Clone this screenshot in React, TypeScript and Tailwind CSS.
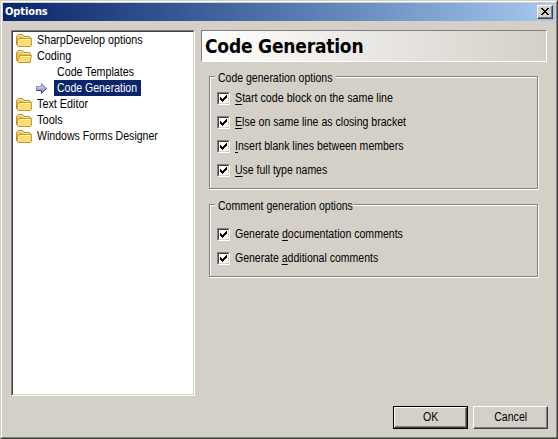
import type { ReactNode } from "react";

function Folder({ open = false }: { open?: boolean }) {
  return (
    <svg className="block h-4 w-4 shrink-0" viewBox="0 0 16 16">
      <path d="M0.5 12.5V4.5L2.5 2.5H6.5L8 4.5H13.5L14.5 5.5V13.5L13.5 14.5H2.5L0.5 12.5Z" fill="#eec04e" stroke="#bf9030" />
      <path d="M1.8 5L3 3.5H6L7.5 5.5H13" fill="none" stroke="#fff0a8" />
      {open ? (
        <>
          <path d="M2.5 14.5L1.5 13.5L3.5 7.5H15.5L14 14.5Z" fill="#fbdc74" stroke="#c7962f" />
          <path d="M4.2 8.5H14.5" stroke="#fff8c8" />
        </>
      ) : (
        <>
          <path d="M2.5 14.5L1.5 13.5V8.5L3.5 6.5H15.5V13.5L14.5 14.5Z" fill="#fbdc74" stroke="#c7962f" />
          <path d="M2.5 13.5V9L4 7.5H14.5" fill="none" stroke="#fff3b4" />
        </>
      )}
    </svg>
  );
}

function Arrow() {
  return (
    <svg className="ml-5 block h-4 w-4 shrink-0" viewBox="0 0 16 16">
      <path d="M0.5 6.5H5.5V3.5L10.5 8.5L5.5 13.5V10.5H0.5Z" fill="#a9aede" stroke="#8389c4" />
      <path d="M0.5 10.5H5.5V13L10.5 8.5" fill="none" stroke="#3d4278" />
      <path d="M1 7.5H6.5V6" fill="none" stroke="#c9ccf0" />
    </svg>
  );
}

function Label({ children, scale = "scale-x-[0.88]" }: { children: ReactNode; scale?: string }) {
  return <span className={`inline-block origin-left whitespace-pre ${scale}`}>{children}</span>;
}

function TreeRow({ text, open, scale }: { text: string; open?: boolean; scale?: string }) {
  return (
    <div className="flex h-4 items-center pl-[3px]">
      <Folder open={open} />
      <div className="ml-[5px] leading-4">
        <Label scale={scale}>{text}</Label>
      </div>
    </div>
  );
}

function Check({ children, scale }: { children: ReactNode; scale?: string }) {
  return (
    <div className="flex h-6 items-center">
      <div className="h-[13px] w-[13px] shrink-0 border border-t-[#808080] border-r-white border-b-white border-l-[#808080]">
        <div className="h-[11px] w-[11px] border border-t-[#404040] border-r-[#d4d0c8] border-b-[#d4d0c8] border-l-[#404040] bg-white">
          <svg className="block h-[9px] w-[9px]" viewBox="0 0 9 9" shapeRendering="crispEdges">
            <path d="M1 3h1v1h1v1h1v-1h1v-1h1v-1h1v-1h1v3h-1v1h-1v1h-1v1h-1v1h-1v-1h-1v-1h-1z" fill="#000" />
          </svg>
        </div>
      </div>
      <div className="ml-[5px] leading-4">
        <Label scale={scale}>{children}</Label>
      </div>
    </div>
  );
}

function Key({ children }: { children: string }) {
  return <span className="underline decoration-1 underline-offset-2">{children}</span>;
}

function Group({ title, legend, children }: { title: string; legend: string; children: ReactNode }) {
  return (
    <div className="grid">
      <div className="col-start-1 row-start-1 mt-[6px] mr-px mb-0.5 border border-[#808080] shadow-[1px_1px_0_#fff,inset_1px_1px_0_#fff]" />
      <div className="z-10 col-start-1 row-start-1 flex flex-col px-2">
        <div className={`-ml-[2px] h-4 overflow-hidden bg-[#d4d0c8] pl-[3px] leading-4 ${legend}`}>
          <Label scale="scale-x-[0.875]">{title}</Label>
        </div>
        {children}
      </div>
    </div>
  );
}

export default function App() {
  return (
    <div className="h-[439px] w-[558px] border border-t-[#d4d0c8] border-r-[#404040] border-b-[#404040] border-l-[#d4d0c8] bg-[#d4d0c8] font-['Liberation_Sans',Arial,sans-serif] text-xs text-black">
      <div className="flex h-full flex-col border border-t-white border-r-[#808080] border-b-[#808080] border-l-white p-px">
        <div className="flex h-[18px] shrink-0 items-center justify-between bg-linear-to-r from-[#0a246a] to-[#a6caf0] px-0.5 text-white">
          <span className="font-['DejaVu_Sans_Condensed','DejaVu_Sans',sans-serif] text-[11px] leading-4 font-bold tracking-[-0.1px]">Options</span>
          <div className="flex h-3.5 w-4 items-center justify-center border border-t-white border-r-[#404040] border-b-[#404040] border-l-white bg-[#d4d0c8] shadow-[inset_-1px_-1px_0_#808080]">
            <svg className="mr-px mb-px block h-[7px] w-2" viewBox="0 0 8 7" shapeRendering="crispEdges" fill="#000">
              <path d="M0 0h2v1h1v1h2v-1h1v-1h2v1h-1v1h-1v1h-1v1h1v1h1v1h1v1h-2v-1h-1v-1h-2v1h-1v1h-2v-1h1v-1h1v-1h1v-1h-1v-1h-1v-1h-1z" />
            </svg>
          </div>
        </div>

        <div className="mt-[9px] flex gap-1.5 pl-2">
          <div className="h-[366px] w-[184px] shrink-0 border border-t-[#808080] border-r-white border-b-white border-l-[#808080]">
            <div className="h-full border border-t-[#404040] border-r-[#d4d0c8] border-b-[#d4d0c8] border-l-[#404040] bg-white">
              <TreeRow text="SharpDevelop options" scale="scale-x-[0.895]" />
              <TreeRow text="Coding" open scale="scale-x-[0.9]" />
              <div className="h-4 pl-[43.5px] leading-4">
                <Label scale="scale-x-[0.89]">Code Templates</Label>
              </div>
              <div className="flex h-4 items-center">
                <div className="w-[41px] pl-[3px]">
                  <Arrow />
                </div>
                <div className="h-4 w-[87px] bg-[#0a246a] pl-[2.5px] leading-4 text-white">
                  <Label scale="scale-x-[0.875]">Code Generation</Label>
                </div>
              </div>
              <TreeRow text="Text Editor" scale="scale-x-[0.9]" />
              <TreeRow text="Tools" scale="scale-x-[0.92]" />
              <TreeRow text="Windows Forms Designer" />
            </div>
          </div>

          <div className="w-[346px]">
            <div className="flex h-8 items-center border border-t-[#808080] border-r-white border-b-white border-l-[#808080] bg-[linear-gradient(97deg,#fff,#d4d0c8)] pl-[3px]">
              <span className="font-['DejaVu_Sans_Condensed','DejaVu_Sans',sans-serif] text-[19px] leading-[30px] font-bold tracking-[-0.2px]">Code Generation</span>
            </div>
            <div className="mt-2 ml-2 flex w-[330px] flex-col gap-[7px]">
              <Group title="Code generation options" legend="w-[121px]">
                <div className="pb-[9px]">
                  <Check scale="scale-x-[0.89]"><Key>S</Key>tart code block on the same line</Check>
                  <Check scale="scale-x-[0.881]"><Key>E</Key>lse on same line as closing bracket</Check>
                  <Check scale="scale-x-[0.877]"><Key>I</Key>nsert blank lines between members</Check>
                  <Check scale="scale-x-[0.875]"><Key>U</Key>se full type names</Check>
                </div>
              </Group>
              <Group title="Comment generation options" legend="w-[139px]">
                <div className="pt-2 pb-[9px]">
                  <Check>Generate <Key>d</Key>ocumentation comments</Check>
                  <Check scale="scale-x-[0.876]">Generate <Key>a</Key>dditional comments</Check>
                </div>
              </Group>
            </div>
          </div>
        </div>

        <div className="mt-2.5 flex gap-[5px] pl-[390px]">
          <button className="h-[23px] w-[75px] border border-black">
            <span className="flex h-full items-center justify-center border border-t-white border-r-[#404040] border-b-[#404040] border-l-white pb-0.5 shadow-[inset_-1px_-1px_0_#808080]">
              <span className="inline-block scale-x-[0.88] leading-4">OK</span>
            </span>
          </button>
          <button className="flex h-[23px] w-[75px] items-center justify-center border border-t-white border-r-[#404040] border-b-[#404040] border-l-white pb-0.5 shadow-[inset_-1px_-1px_0_#808080]">
            <span className="inline-block scale-x-[0.88] leading-4">Cancel</span>
          </button>
        </div>
      </div>
    </div>
  );
}
